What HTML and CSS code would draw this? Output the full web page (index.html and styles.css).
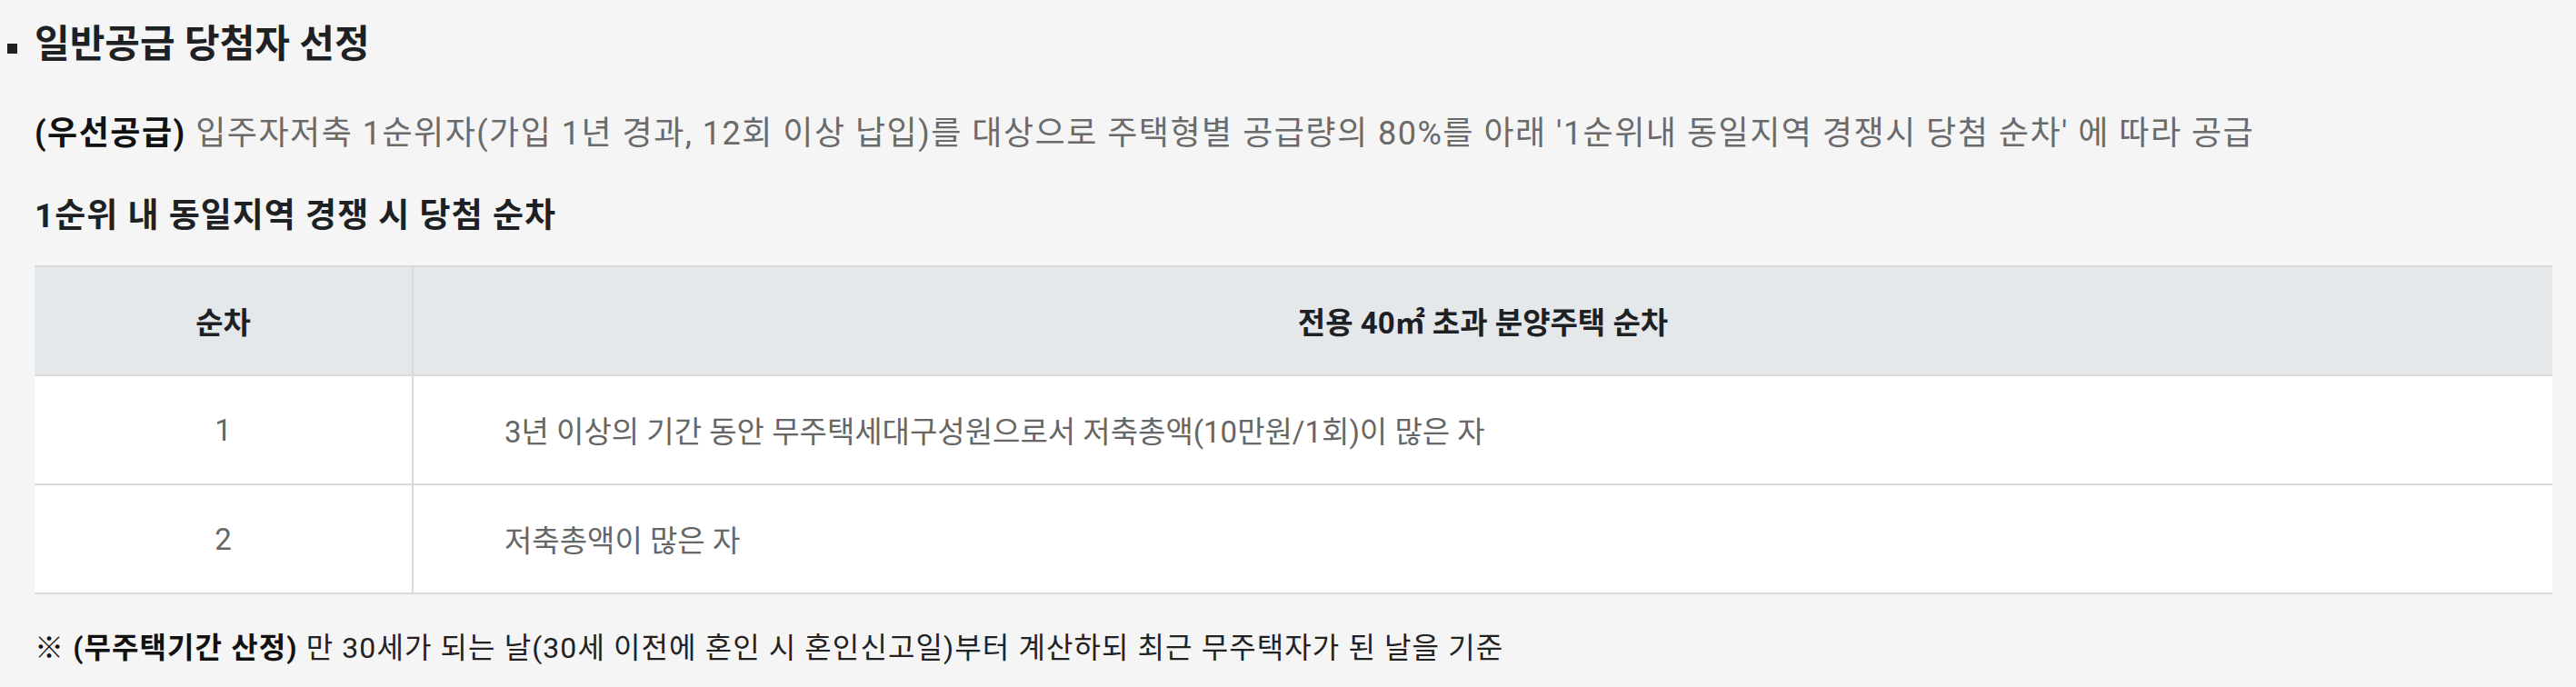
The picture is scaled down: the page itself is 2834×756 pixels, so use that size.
FILE: index.html
```html
<!DOCTYPE html>
<html lang="ko">

<head>
    <meta charset="UTF-8">
    <meta name="viewport" content="width=device-width, initial-scale=1.0">
    <title>일반공급 당첨자 선정</title>
    <link rel="stylesheet" href="styles.css">
</head>

<body>
    <div class="section">
        <h2 class="section-title">일반공급 당첨자 선정</h2>

        <p class="desc"><strong>(우선공급)</strong> 입주자저축 1순위자(가입 1년 경과, 12회 이상 납입)를 대상으로 주택형별 공급량의 80%를 아래 '1순위내 동일지역 경쟁시 당첨 순차' 에 따라 공급</p>

        <h3 class="sub-title">1순위 내 동일지역 경쟁 시 당첨 순차</h3>

        <table class="rank-table">
            <thead>
                <tr>
                    <th class="col-rank">순차</th>
                    <th>전용 40㎡ 초과 분양주택 순차</th>
                </tr>
            </thead>
            <tbody>
                <tr>
                    <td class="col-rank">1</td>
                    <td class="text">3년 이상의 기간 동안 무주택세대구성원으로서 저축총액(10만원/1회)이 많은 자</td>
                </tr>
                <tr>
                    <td class="col-rank">2</td>
                    <td class="text">저축총액이 많은 자</td>
                </tr>
            </tbody>
        </table>

        <p class="note"><strong>※ (무주택기간 산정)</strong> 만 30세가 되는 날(30세 이전에 혼인 시 혼인신고일)부터 계산하되 최근 무주택자가 된 날을 기준</p>
    </div>
</body>

</html>
```

FILE: styles.css
```css
body {
    margin: 0;
    background-color: #f5f5f5;
    font-family: Roboto, "Noto Sans CJK KR", sans-serif;
    color: #222;
}

.section {
    padding: 17px 26px 0 38px;
}

.section-title {
    margin: 0;
    font-size: 42px;
    line-height: 63px;
    font-weight: 700;
    color: #1e2124;
}

.section-title::before {
    content: "";
    display: inline-block;
    width: 11px;
    height: 11px;
    margin-left: -30px;
    margin-right: 19px;
    vertical-align: 4px;
    background-color: #1e2124;
}

.desc {
    margin: 40px 0 0;
    font-size: 36px;
    line-height: 54px;
    letter-spacing: 1.5px;
    color: #6a6a6a;
}

.desc strong {
    color: #111;
    font-weight: 700;
}

.sub-title {
    margin: 38px 0 0;
    font-size: 37px;
    line-height: 52px;
    letter-spacing: 1px;
    font-weight: 700;
    color: #1e2124;
}

.rank-table {
    width: 100%;
    margin-top: 28px;
    border-collapse: collapse;
    border-top: 2px solid #dadada;
}

.rank-table th,
.rank-table td {
    height: 118px;
    padding: 0;
    border-bottom: 2px solid #dadada;
    border-left: 2px solid #dadada;
}

.rank-table th:first-child,
.rank-table td:first-child {
    border-left: none;
}

.rank-table th {
    background-color: #e5e8eb;
    font-size: 33px;
    font-weight: 700;
    color: #1e2124;
    text-align: center;
}

.rank-table td {
    background-color: #fff;
    font-size: 33px;
    color: #666;
}

.col-rank {
    width: 415px;
    text-align: center;
}

.rank-table td.text {
    padding-left: 100px;
    text-align: left;
}

.note {
    margin: 36px 0 0;
    font-size: 32px;
    line-height: 46px;
    letter-spacing: 1.1px;
    color: #222;
}

.note strong {
    color: #111;
    font-weight: 700;
}
```
